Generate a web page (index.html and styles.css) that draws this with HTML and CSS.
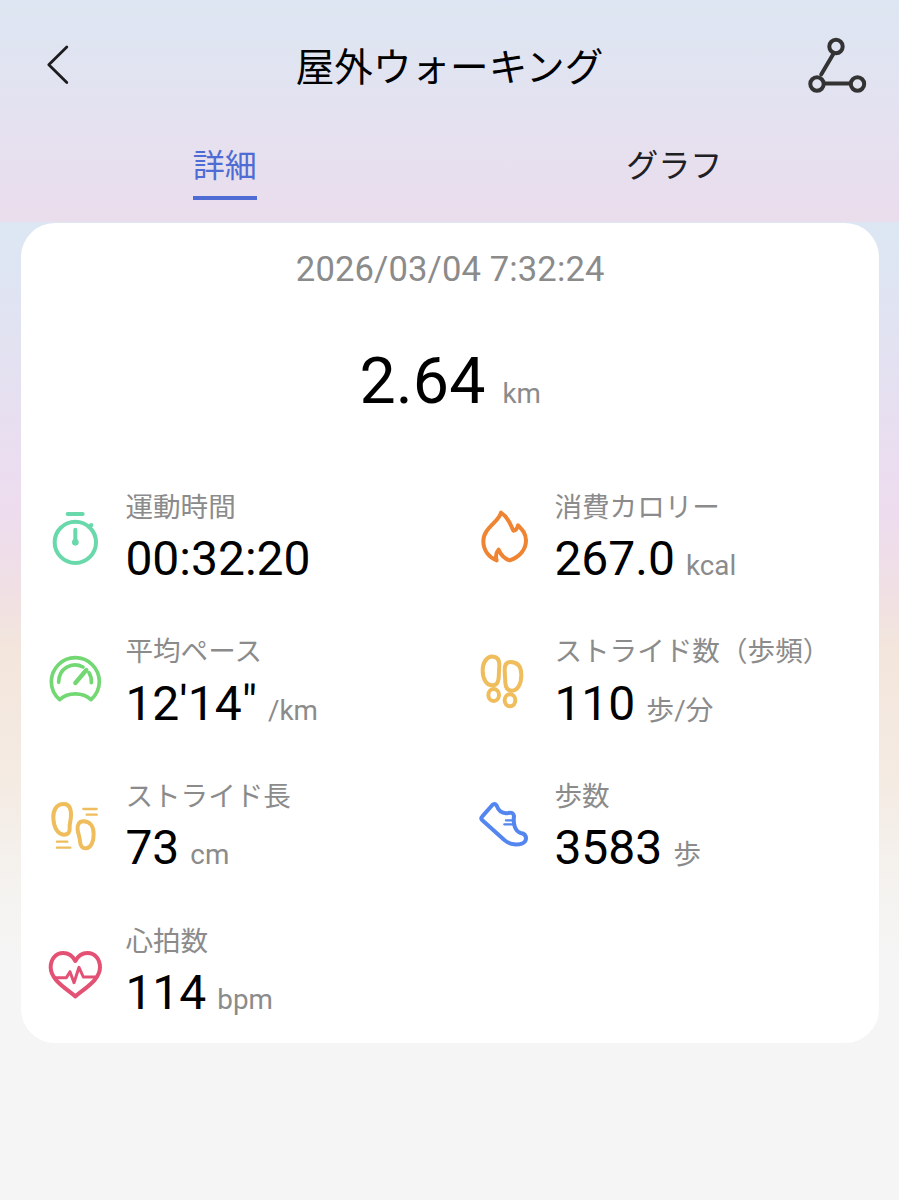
FILE: index.html
```
<!DOCTYPE html>
<html lang="ja">
<head>
<meta charset="utf-8">
<title>屋外ウォーキング</title>
<link rel="stylesheet" href="styles.css">
</head>
<body>
<header class="header">
  <div class="bar">
    <svg class="back" viewBox="0 0 36 48"><path d="M26.8 6 8.8 23.8 26.8 41.6"/></svg>
    <h1 class="title">屋外ウォーキング</h1>
    <svg class="route" viewBox="0 0 64 60"><path d="M30.6 16.5 18.2 37.5M22.5 46.6H46.5"/><circle cx="33" cy="9.5" r="6.7"/><circle cx="14" cy="47" r="6.7"/><circle cx="54.5" cy="47" r="6.7"/></svg>
  </div>
  <nav class="tabs">
    <div class="tab active"><span>詳細</span></div>
    <div class="tab"><span>グラフ</span></div>
  </nav>
</header>
<main class="content">
  <section class="card">
    <div class="date">2026/03/04 7:32:24</div>
    <div class="distance"><span class="big">2.64</span><span class="unit">km</span></div>
    <div class="grid">
      <div class="item">
        <svg class="icon teal" viewBox="45 84 180 180"><circle cx="136" cy="187" r="62"/><path d="M113 102H158M136 149V187M178 141 184 135"/><circle class="dot" cx="136" cy="187" r="10"/></svg>
        <div class="info"><div class="label">運動時間</div><div class="row"><span class="value">00:32:20</span></div></div>
      </div>
      <div class="item">
        <svg class="icon orange" viewBox="42 84 180 180"><path d="M123 98C118 126 70 142 70 184C70 212 88 233 110 241C106 229 109 217 116 209C122 223 130 235 149 241C181 231 198 207 198 181C197 158 186 149 174 136C172 145 167 151 160 152C151 134 147 114 123 98Z"/></svg>
        <div class="info"><div class="label">消費カロリー</div><div class="row"><span class="value">267.0</span><span class="unit">kcal</span></div></div>
      </div>
      <div class="item">
        <svg class="icon green" viewBox="45 68 180 180"><path d="M89 208C72 193 64 174 64 154A72 72 0 0 1 208 154C208 174 199 193 183 208C158 185 114 185 89 208Z"/><path d="M86 156C86 112 127 93 159 110M177 127C183 136 185 146 184 157"/><path class="needle" d="M136 158 169 119"/></svg>
        <div class="info"><div class="label">平均ペース</div><div class="row"><span class="value">12'14"</span><span class="unit">/km</span></div></div>
      </div>
      <div class="item">
        <svg class="icon yellow" viewBox="42 68 180 180"><path d="M100 79C79 77 68 98 68 120C68 146 79 165 98 165C112 165 115 154 116 143L118 104C118 89 113 80 100 79Z"/><path d="M151 95C138 95 134 105 134 119L136 157C137 172 143 181 155 181C174 181 184 159 184 134C184 110 174 95 151 95Z"/><ellipse cx="101" cy="194" rx="16" ry="18"/><ellipse cx="150" cy="210" rx="16" ry="18"/></svg>
        <div class="info"><div class="label">ストライド数（歩頻）</div><div class="row"><span class="value">110</span><span class="unit">歩/分</span></div></div>
      </div>
      <div class="item">
        <svg class="icon yellow" viewBox="45 82 180 180"><path d="M103 100C79 99 69 119 70 142C71 168 82 192 102 192C116 192 120 183 119 170C118 158 123 150 123 132C123 112 118 101 103 100Z"/><path d="M160 152C147 152 141 163 143 178C145 192 149 199 150 212C151 226 157 234 169 233C184 232 191 210 191 190C191 167 179 152 160 152Z"/><path class="thin" d="M160 115H200M170 132H200M81 213H112M81 231H121"/></svg>
        <div class="info"><div class="label">ストライド長</div><div class="row"><span class="value">73</span><span class="unit">cm</span></div></div>
      </div>
      <div class="item">
        <svg class="icon blue" viewBox="42 82 180 180"><path d="M97 103Q104 96 110 105C115 119 126 130 145 127Q159 123 162 136C159 160 165 182 182 187Q198 189 198 204C197 219 177 222 162 221C148 220 142 215 133 208L67 149Q61 143 67 137Z"/><path class="thin" d="M138 149H160M133 161H162"/></svg>
        <div class="info"><div class="label">歩数</div><div class="row"><span class="value">3583</span><span class="unit">歩</span></div></div>
      </div>
      <div class="item">
        <svg class="icon red" viewBox="135 81 180 180"><path d="M226 138C218 123 207 114 190 114C166 114 152 133 152 157C152 193 192 216 226 244C260 216 300 193 300 157C300 133 286 114 262 114C245 114 234 123 226 138Z"/><path class="pulse" d="M166 188H199L210 170 222 203 237 157 250 186H286"/></svg>
        <div class="info"><div class="label">心拍数</div><div class="row"><span class="value">114</span><span class="unit">bpm</span></div></div>
      </div>
    </div>
  </section>
</main>
</body>
</html>
```

FILE: styles.css
```
* { box-sizing: border-box; }
body {
  margin: 0;
  min-height: 1200px;
  display: flex;
  flex-direction: column;
  background: #f5f5f5;
  font-family: Roboto, "Noto Sans CJK JP", sans-serif;
  color: #000;
}
svg { fill: none; stroke-linecap: round; stroke-linejoin: round; flex: none; display: block; }
.header {
  height: 222px;
  background: linear-gradient(#dde6f2, #e2e3f1 38%, #e6e0ef 65%, #eaddec);
}
.bar {
  height: 132px;
  padding: 0 32px 0 40px;
  display: flex;
  align-items: center;
  justify-content: space-between;
}
.back { width: 36px; height: 48px; margin-right: 20px; stroke: #1c1c1e; stroke-width: 2.8; margin-top: -2px; }
.route { width: 64px; height: 60px; margin-top: 2px; stroke: #333; stroke-width: 4; }
.title { margin: 4px 0 0; font-size: 38.6px; line-height: 56px; font-weight: 400; }
.tabs { display: flex; }
.tab { flex: 1; display: flex; justify-content: center; font-size: 32px; line-height: 48px; color: #202024; }
.tab span { height: 68px; padding-top: 9.5px; }
.tab.active { color: #4e6cd3; }
.tab.active span { border-bottom: 4px solid #4e6cd3; }
.content {
  height: 978px;
  padding: .6px 20px 0 21.4px;
  background: linear-gradient(#dce7f3, #e2e2f1 120px, #e9def0 225px, #eddcee 290px, #f0e0e4 370px, #f3e6dc 430px, #f4ebe3 560px, #f5f3f0 670px, #f5f5f5 740px);
}
.card { height: 820.4px; padding-top: 21.6px; border-radius: 34px; background: #fff; }
.date { text-align: center; font-size: 34.6px; letter-spacing: .12px; line-height: 50px; color: #8b8b8b; }
.distance { margin-top: 47px; height: 80px; display: flex; justify-content: center; align-items: baseline; line-height: 80px; }
.big { font-size: 64.5px; letter-spacing: .1px; }
.unit { font-size: 27.8px; color: #8b8b8b; margin-left: 11px; }
.distance .unit { margin-left: 17px; }
.grid { margin-top: 67px; display: grid; grid-template-columns: 429px 429px; grid-auto-rows: 144.67px; }
.item { display: flex; padding-left: 24px; gap: 20px; }
.icon { width: 60px; height: 60px; margin-top: 20px; stroke-width: 12; }
.label { margin-top: 1.6px; font-size: 27.6px; line-height: 36px; color: #8b8b8b; }
.row { display: flex; align-items: baseline; margin-top: 5.2px; line-height: 56px; }
.value { font-size: 48px; }
.teal { stroke: #69d9ab; }
.dot { fill: #69d9ab; stroke: none; }
.orange { stroke: #ef8432; }
.green { stroke: #73d873; stroke-width: 11; }
.needle { stroke-width: 13; }
.yellow { stroke: #efbd5c; }
.thin { stroke-width: 7; }
.blue { stroke: #5386ee; }
.red { stroke: #e35274; }
.pulse { stroke-width: 9; }
```
